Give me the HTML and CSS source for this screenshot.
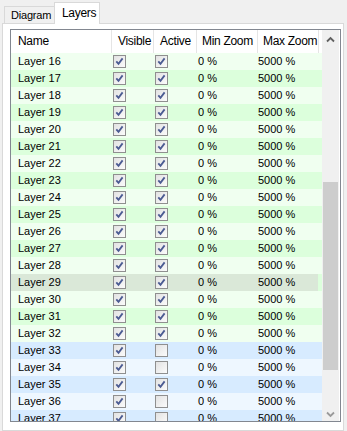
FILE: index.html
```html
<!DOCTYPE html>
<html lang="en">
<head>
    <meta charset="UTF-8">
    <title>Layers</title>
    <link rel="stylesheet" href="styles.css">
</head>
<body>
    <div class="tabs">
        <div class="tab">Diagram</div>
        <div class="tab active">Layers</div>
    </div>
    <div class="panel">
        <div class="grid">
            <div class="grid-body">
                <div class="grid-head">
                    <div class="hcol c-name">Name</div>
                    <div class="hcol c-vis">Visible</div>
                    <div class="hcol c-act">Active</div>
                    <div class="hcol c-min">Min Zoom</div>
                    <div class="hcol c-max">Max Zoom</div>
                </div>
                <div id="rows">
                    <!-- rows are built by the script below -->
                </div>
            </div>
            <div class="scrollbar">
                <div class="sb-btn">
                    <svg width="17" height="17" viewBox="0 0 17 17"><polyline points="5,11.5 8.5,8 12,11.5" fill="none" stroke="#606060" stroke-width="1.8"/></svg>
                </div>
                <div class="sb-track">
                    <div class="sb-thumb"></div>
                </div>
                <div class="sb-btn">
                    <svg width="17" height="17" viewBox="0 0 17 17"><polyline points="5,8.5 8.5,12 12,8.5" fill="none" stroke="#9a9a9a" stroke-width="1.8"/></svg>
                </div>
            </div>
        </div>
    </div>
    <script>
        const checkSvg = '<svg width="11" height="11" viewBox="0 0 11 11"><path d="M2.3 5.3 L4.5 7.8 L8.6 2.4" fill="none" stroke="#4b5b92" stroke-width="1.8"/></svg>';
        const inactive = [33, 34, 36, 37];

        function checkbox(checked) {
            return `<span class="cb">${checked ? checkSvg : ''}</span>`;
        }

        function buildRows() {
            const rows = document.getElementById('rows');
            for (let n = 16; n <= 37; n++) {
                const row = document.createElement('div');
                let cls = n >= 33 ? 'blue' : 'green';
                cls += n % 2 ? ' dark' : ' light';
                if (n === 29) cls += ' selected';
                row.className = 'row ' + cls;
                row.innerHTML = `
                    <div class="cell c-name">Layer ${n}</div>
                    <div class="cell c-vis">${checkbox(true)}</div>
                    <div class="cell c-act">${checkbox(!inactive.includes(n))}</div>
                    <div class="cell c-min">0 %</div>
                    <div class="cell c-max">5000 %</div>
                `;
                rows.appendChild(row);
            }
        }

        buildRows();
    </script>
</body>
</html>
```

FILE: styles.css
```css
body {
    margin: 0;
    background-color: #f0f0f0;
    font-family: "Liberation Sans", Arial, sans-serif;
    font-size: 11px;
    color: #000;
}

/* tab strip */
.tabs {
    display: flex;
    align-items: flex-end;
    height: 23px;
    padding-left: 4px;
}

.tab {
    box-sizing: border-box;
    width: 51px;
    height: 17px;
    padding: 2px 0 0 6px;
    border: 1px solid #d9d9d9;
    border-bottom: none;
    background-color: #f0f0f0;
    letter-spacing: -0.2px;
    white-space: nowrap;
}

.tab.active {
    position: relative;
    z-index: 1;
    width: 46px;
    height: 22px;
    margin-left: -1px;
    margin-bottom: -1px;
    padding: 3px 0 0 7px;
    background-color: #fff;
    font-size: 12px;
    letter-spacing: -0.3px;
}

.panel {
    box-sizing: border-box;
    width: 342px;
    height: 408px;
    margin-left: 2px;
    padding: 5px 2px 8px 7px;
    border: 1px solid #d9d9d9;
    background-color: #fff;
}

/* data grid */
.grid {
    display: flex;
    height: 393px;
    box-sizing: border-box;
    border: 1px solid #828790;
    background-color: #fff;
}

.grid-body {
    width: 311px;
    overflow: hidden;
}

.grid-head {
    display: flex;
    height: 23px;
    line-height: 23px;
    font-size: 12px;
    letter-spacing: -0.3px;
}

.hcol {
    box-sizing: border-box;
    padding-left: 6px;
    border-right: 1px solid #e5e5e5;
    white-space: nowrap;
    overflow: hidden;
}

.c-name { width: 101px; }
.c-vis { width: 42px; }
.c-act { width: 43px; }
.c-min { width: 61px; }
.c-max { width: 61px; }

.hcol.c-name { padding-left: 7px; }
.hcol.c-min,
.hcol.c-max { padding-left: 5px; }

.row {
    display: flex;
    height: 17px;
    line-height: 17px;
}

.row.green.light { background-color: #f0fff0; }
.row.green.dark { background-color: #dcffdc; }
.row.blue.light { background-color: #eef7ff; }
.row.blue.dark { background-color: #d7ebff; }

.row.selected {
    background: linear-gradient(to right, #dae8d8 307px, #dcffdc 307px);
}

.cell {
    box-sizing: border-box;
    white-space: nowrap;
}

.cell.c-name { padding-left: 7px; }
.cell.c-vis,
.cell.c-act { padding: 2px 0 0 1px; }
.cell.c-min { padding-left: 1px; }
.cell.c-max { padding-left: 0; }

.cb {
    display: block;
    box-sizing: border-box;
    width: 13px;
    height: 13px;
    border: 1px solid #8f8f8f;
    background: linear-gradient(135deg, #e2e2e2, #fbfbfb);
}

.cb svg {
    display: block;
}

/* scrollbar */
.scrollbar {
    display: flex;
    flex-direction: column;
    width: 17px;
    background-color: #f0f0f0;
}

.sb-btn {
    height: 17px;
}

.sb-btn svg {
    display: block;
}

.sb-track {
    flex: 1;
}

.sb-thumb {
    width: 15px;
    height: 188px;
    margin: 135px 0 0 1px;
    background-color: #cdcdcd;
}
```
